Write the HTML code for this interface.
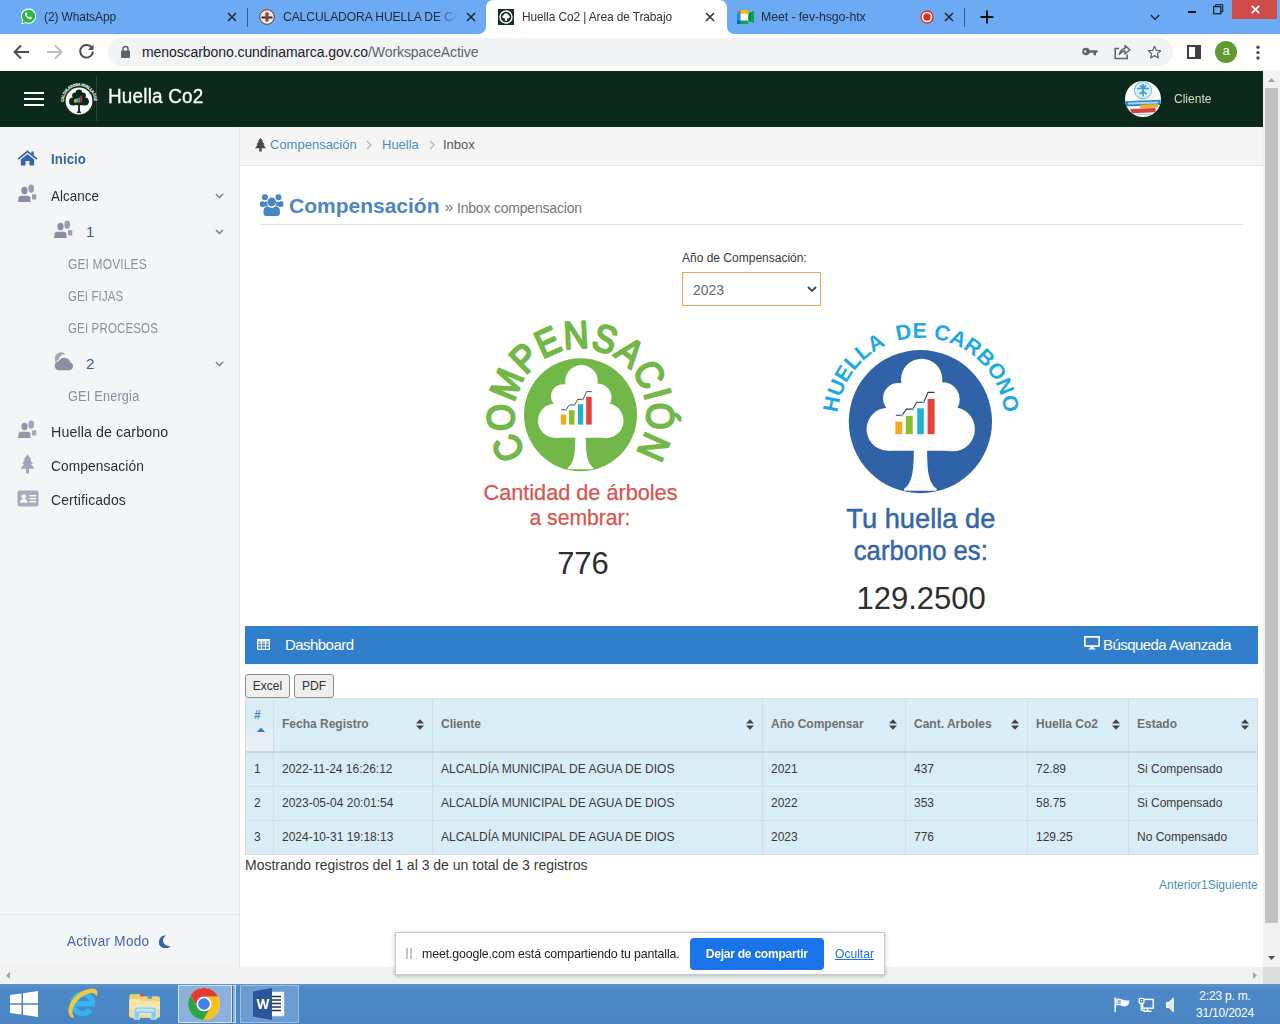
<!DOCTYPE html>
<html><head><meta charset="utf-8">
<style>
*{box-sizing:border-box;margin:0;padding:0}
html,body{width:1280px;height:1024px;overflow:hidden;background:#fff;font-family:"Liberation Sans",sans-serif;}
.abs{position:absolute}
#root{position:relative;width:1280px;height:1024px;overflow:hidden}
/* chrome tabs */
#tabbar{left:0;top:0;width:1280px;height:34px;background:#6cabf4}
.tabtxt{position:absolute;transform-origin:0 50%;top:9px;font-size:13px;color:#1f2937;white-space:nowrap;letter-spacing:-0.1px}
#acttab{left:486px;top:0;width:241px;height:34px;background:#fff;border-radius:8px 8px 0 0}
#addr{left:0;top:34px;width:1280px;height:37px;background:#fff}
#omni{left:108px;top:38px;width:1065px;height:28px;border-radius:14px;background:#f1f3f4}
#url{left:142px;top:44px;font-size:14px;color:#202124;white-space:nowrap;letter-spacing:-0.08px}
#url span{color:#5f6368}
/* app header */
#hdr{left:0;top:71px;width:1263px;height:56px;background:#0c2a1b}
#brand{left:108px;top:85px;font-size:20px;color:#fff;white-space:nowrap;letter-spacing:0.2px;transform:scaleX(.945);transform-origin:0 50%;-webkit-text-stroke:.3px #fff}
#cliente{left:1174px;top:91px;font-size:13px;color:#d8dcc8;white-space:nowrap;transform:scaleX(.925);transform-origin:0 50%}
/* sidebar */
#side{left:0;top:127px;width:240px;height:840px;background:#f4f5f7;border-right:1px solid #e6e7ea}
.sitem{position:absolute;transform-origin:0 50%;font-size:15px;color:#2b2f36;white-space:nowrap;letter-spacing:0.1px}
.ssub{position:absolute;transform-origin:0 50%;font-size:14px;color:#8c8fa0;white-space:nowrap;left:68px;letter-spacing:0.2px}
/* main */
#crumb{left:240px;top:127px;width:1023px;height:39px;background:#f5f5f5;border-bottom:1px solid #e5e5e5}
.ctx{position:absolute;top:137px;font-size:13px;white-space:nowrap}
#ptitle{left:289px;top:194px;font-size:21px;font-weight:bold;color:#4a86c5;white-space:nowrap}
#psub{left:445px;top:200px;font-size:14px;color:#777;white-space:nowrap;letter-spacing:-0.2px}
#pline{left:260px;top:224px;width:983px;height:1px;background:#dbe3ec}
#lbl{left:682px;top:251px;font-size:12px;color:#393939;white-space:nowrap}
#sel{left:682px;top:272px;width:139px;height:34px;border:1px solid #eba562;background:#fff}
#sel span{position:absolute;left:10px;top:8.500px;font-size:14px;color:#696969}
.big{position:absolute;font-size:32px;color:#2d2d2d;white-space:nowrap}
/* dashboard */
#dash{left:245px;top:626px;width:1013px;height:38px;background:#307ecc}
#dash .t{position:absolute;left:40px;top:10px;font-size:15px;color:#fff;letter-spacing:-0.55px}
#dash .r{position:absolute;left:858px;top:9.500px;font-size:15px;color:#fff;letter-spacing:-0.55px;white-space:nowrap}
.btn{position:absolute;top:674px;height:24px;border:1px solid #8e8e8e;border-radius:3px;background:#efefef;font-size:12px;color:#333;text-align:center;line-height:22px}
#tbl{left:245px;top:699px;width:1013px;height:156px;background:#d9edf7}
.hl{position:absolute;background:#d5dde2}
.th{position:absolute;top:717px;font-size:12px;font-weight:bold;color:#707070;white-space:nowrap}
.td{position:absolute;font-size:12px;color:#393939;white-space:nowrap}
#info{left:245px;top:857px;font-size:14px;color:#393939;white-space:nowrap}
#pag{left:1159px;top:878px;font-size:12px;color:#4c8fbd;white-space:nowrap}
/* scrollbars */
#vsb{left:1263px;top:71px;width:17px;height:896px;background:#f1f1f1}
#vth{left:1265px;top:88px;width:13px;height:835px;background:#c1c1c1}
#hsb{left:0;top:967px;width:1263px;height:17px;background:#f1f1f1}
/* share bar */
#share{left:395px;top:932px;width:490px;height:43px;background:#fff;border:1px solid #c9c9c9;box-shadow:0 1px 4px rgba(0,0,0,.25)}
#share .m{position:absolute;left:26px;top:13px;font-size:13px;color:#202124;white-space:nowrap;letter-spacing:-0.15px;transform:scaleX(.952);transform-origin:0 50%}
#share .b{position:absolute;left:294px;top:5px;width:134px;height:32px;border-radius:4px;background:#1a73e8;color:#fff;font-size:13px;font-weight:bold;text-align:center;line-height:31px;letter-spacing:-0.3px}
#share .o{position:absolute;left:439px;top:13px;font-size:13px;color:#1a73e8;text-decoration:underline;transform:scaleX(.93);transform-origin:0 50%}
/* taskbar */
#task{left:0;top:984px;width:1280px;height:40px;background:linear-gradient(#5b95d2 0,#4c88c7 12%,#4a84c3 100%)}
#clock{left:1180px;top:988px;width:90px;text-align:center;font-size:12px;color:#fff;line-height:17px;letter-spacing:-0.2px}
</style></head><body>
<div id="root">
<div class="abs" id="tabbar"></div>
<svg class="abs" style="left:476px;top:0" width="262" height="34" viewBox="476 0 262 34"><path d="M478 34C483 34 486 31 486 26V8C486 3 489 0 494 0H719C724 0 727 3 727 8V26C727 31 730 34 735 34z" fill="#fff"/></svg>
<!-- whatsapp icon -->
<svg class="abs" style="left:20px;top:8px" width="17" height="17" viewBox="0 0 17 17"><circle cx="8.5" cy="8.2" r="7.6" fill="#fff"/><circle cx="8.5" cy="8.2" r="6.5" fill="#2cb742"/><path d="M1 16.5 L2.6 11.5 L6 14.8Z" fill="#fff"/><path d="M2.4 15.2 L3.4 12 L5.6 14.2Z" fill="#2cb742"/><path d="M5.6 4.6c.4-.5 1-.4 1.200 0l.6 1.400c.1.300 0 .5-.2.700l-.4.500c.5 1 1.300 1.800 2.400 2.300l.6-.6c.2-.2.500-.3.700-.1l1.300.7c.4.200.4.700.1 1.100-.6.800-1.600 1-2.600.6-2-.7-3.500-2.200-4.200-4.100-.3-.9-.1-1.800.5-2.500z" fill="#fff"/></svg>
<div class="tabtxt" style="left:44px;transform:scaleX(.92)">(2) WhatsApp</div>
<svg class="abs" style="left:227px;top:12px" width="10" height="10" viewBox="0 0 10 10"><path d="M1 1L9 9M9 1L1 9" stroke="#1f2937" stroke-width="1.6"/></svg>
<div class="abs" style="left:247px;top:8px;width:1px;height:19px;background:#3c5a80"></div>
<!-- tab2 favicon -->
<svg class="abs" style="left:259px;top:9px" width="16" height="16" viewBox="0 0 16 16"><circle cx="8" cy="8" r="7.3" fill="#efe6e0" stroke="#5a3a30" stroke-width="1"/><path d="M2.500 7.500h11v2h-11z" fill="#3a2a28"/><path d="M6.500 3.500h3v9h-3z" fill="#7a4a40"/><circle cx="8" cy="5" r="1.600" fill="#c0392b"/></svg>
<div class="tabtxt" style="left:283px;width:176px;overflow:hidden;-webkit-mask-image:linear-gradient(90deg,#000 86%,transparent)"><span style="display:inline-block;transform:scaleX(.93);transform-origin:0 50%">CALCULADORA HUELLA DE CARBONO</span></div>
<svg class="abs" style="left:466px;top:12px" width="10" height="10" viewBox="0 0 10 10"><path d="M1 1L9 9M9 1L1 9" stroke="#1f2937" stroke-width="1.6"/></svg>
<!-- active tab favicon -->
<svg class="abs" style="left:498px;top:9px" width="16" height="16" viewBox="0 0 16 16"><rect width="16" height="16" fill="#14301f"/><circle cx="8" cy="8" r="6" fill="none" stroke="#fff" stroke-width="1.400"/><path d="M8 4.200c1.300 0 2.200.9 2.200 1.900 1 .2 1.500.9 1.500 1.700 0 1-.9 1.700-2 1.700h-.9l.5 2.300h-2.600l.5-2.300h-.9c-1.100 0-2-.7-2-1.700 0-.8.500-1.500 1.500-1.700 0-1 .9-1.900 2.200-1.900z" fill="#fff"/></svg>
<div class="tabtxt" style="left:522px;color:#30343a;transform:scaleX(.915)">Huella Co2 | Area de Trabajo</div>
<svg class="abs" style="left:705px;top:12px" width="10" height="10" viewBox="0 0 10 10"><path d="M1 1L9 9M9 1L1 9" stroke="#30343a" stroke-width="1.600"/></svg>
<!-- meet icon -->
<svg class="abs" style="left:737px;top:10px" width="17" height="14" viewBox="0 0 17 14"><path d="M0 3.500L3.500 0H11.500v4L15.500 1.200c.5-.4 1.500-.2 1.500.6v10.400c0 .8-1 1-1.500.6L11.500 10v4H1.200C.5 14 0 13.500 0 12.800z" fill="#00ac47"/><path d="M0 3.500L3.500 0v3.500z" fill="#ea4335"/><path d="M3.500 0h8v3.500h-8z" fill="#ffba00"/><path d="M0 3.500h3.500v7H0z" fill="#2684fc"/><path d="M0 10.500h3.500V14H1.200C.5 14 0 13.500 0 12.800z" fill="#0066da"/><path d="M3.500 3.500h8v7h-8z" fill="#fff"/><path d="M11.500 4v6l2.500 2V2z" fill="#00832d"/></svg>
<div class="tabtxt" style="left:761px;transform:scaleX(.95)">Meet - fev-hsgo-htx</div>
<svg class="abs" style="left:920px;top:10px" width="14" height="14" viewBox="0 0 14 14"><circle cx="7" cy="7" r="6" fill="#fff" stroke="#d93025" stroke-width="1.300"/><circle cx="7" cy="7" r="3.700" fill="#d93025"/></svg>
<svg class="abs" style="left:944px;top:12px" width="10" height="10" viewBox="0 0 10 10"><path d="M1 1L9 9M9 1L1 9" stroke="#1f2937" stroke-width="1.600"/></svg>
<div class="abs" style="left:964px;top:8px;width:1px;height:19px;background:#3c5a80"></div>
<svg class="abs" style="left:980px;top:10px" width="14" height="14" viewBox="0 0 14 14"><path d="M7 .5V13.500M.5 7H13.500" stroke="#111" stroke-width="2"/></svg>
<svg class="abs" style="left:1150px;top:14px" width="10" height="6.700" viewBox="0 0 12 8"><path d="M1 1.200L6 6.200L11 1.200" stroke="#1f2937" stroke-width="1.700" fill="none"/></svg>
<div class="abs" style="left:1188px;top:10.500px;width:8px;height:2px;background:#111"></div>
<svg class="abs" style="left:1213px;top:4px" width="10.500" height="10.500" viewBox="0 0 12 12"><path d="M3 3V.8h8.200V9H9" stroke="#111" stroke-width="1.100" fill="none"/><rect x=".8" y="3" width="8.200" height="8.200" stroke="#111" stroke-width="1.300" fill="none"/></svg>
<div class="abs" style="left:1232px;top:0;width:45px;height:19px;background:#cf4c4c"></div>
<svg class="abs" style="left:1250.500px;top:5px" width="9" height="9" viewBox="0 0 11 11"><path d="M1 1L10 10M10 1L1 10" stroke="#fff" stroke-width="2.100"/></svg>

<div class="abs" id="addr"></div>
<div class="abs" id="omni"></div>
<svg class="abs" style="left:13px;top:44px" width="17" height="16" viewBox="0 0 17 16"><path d="M16 8H2M8 1.500L1.500 8L8 14.500" stroke="#4a4d51" stroke-width="1.900" fill="none"/></svg>
<svg class="abs" style="left:46px;top:44px" width="17" height="16" viewBox="0 0 17 16"><path d="M1 8H15M9 1.500L15.500 8L9 14.500" stroke="#bbbdc0" stroke-width="1.900" fill="none"/></svg>
<svg class="abs" style="left:78px;top:43px" width="17" height="17" viewBox="0 0 17 17"><path d="M14 5.200A6.300 6.300 0 1 0 14.800 8.500" stroke="#4a4d51" stroke-width="1.900" fill="none"/><path d="M15.500 1.500V7H10z" fill="#4a4d51"/></svg>
<svg class="abs" style="left:120px;top:45px" width="11" height="14" viewBox="0 0 11 14"><rect x="1" y="5.500" width="9" height="7.500" rx="1" fill="#5f6368"/><path d="M3 6V4a2.500 2.500 0 0 1 5 0V6" stroke="#5f6368" stroke-width="1.500" fill="none"/></svg>
<div class="abs" id="url">menoscarbono.cundinamarca.gov.co<span>/WorkspaceActive</span></div>
<!-- key -->
<svg class="abs" style="left:1082px;top:46px" width="16" height="11" viewBox="0 0 16 11"><circle cx="4" cy="5.500" r="3.800" fill="#5f6368"/><circle cx="3.200" cy="5.500" r="1.200" fill="#f1f3f4"/><path d="M7 4.200h8.500v2.600H14v2.400h-2.600V6.800H7z" fill="#5f6368"/></svg>
<!-- share -->
<svg class="abs" style="left:1113px;top:43px" width="18" height="17" viewBox="0 0 18 17"><path d="M6 5.500H2.200V15.500H14.200V11.500" stroke="#5f6368" stroke-width="1.500" fill="none"/><path d="M6.500 11.500C7 7.500 9.500 5.800 12 5.600V2.500L16.800 6.800L12 11V8C10 8 8 9 6.500 11.500z" stroke="#5f6368" stroke-width="1.400" fill="none" stroke-linejoin="round"/></svg>
<!-- star -->
<svg class="abs" style="left:1147px;top:44.500px" width="15" height="14" viewBox="0 0 18 17"><path d="M9 1.500L11.200 6.400L16.500 6.900L12.500 10.500L13.700 15.700L9 12.900L4.300 15.700L5.500 10.500L1.500 6.900L6.800 6.400z" stroke="#5f6368" stroke-width="1.500" fill="none" stroke-linejoin="round"/></svg>
<svg class="abs" style="left:1187px;top:45px" width="14" height="14" viewBox="0 0 14 14"><rect x="1" y="1" width="12" height="12" stroke="#3c4043" stroke-width="2" fill="none"/><rect x="8" y="1" width="5" height="12" fill="#3c4043"/></svg>
<div class="abs" style="left:1215px;top:41px;width:22px;height:22px;border-radius:11px;background:#5e9c2f;color:#fff;font-size:13px;text-align:center;line-height:20px">a</div>
<svg class="abs" style="left:1254px;top:44px" width="8" height="18" viewBox="0 0 8 18"><circle cx="4" cy="3.200" r="1.700" fill="#4a4d51"/><circle cx="4" cy="8.600" r="1.700" fill="#4a4d51"/><circle cx="4" cy="14" r="1.700" fill="#4a4d51"/></svg>

<div class="abs" id="hdr"></div>
<div class="abs" style="left:24px;top:92px;width:20px;height:2px;background:#fff;box-shadow:0 6px 0 #fff,0 12px 0 #fff"></div>
<div class="abs" style="left:96px;top:76px;width:1px;height:45px;background:#2c4536"></div>
<!-- brand logo -->
<svg class="abs" style="left:56px;top:78.300px" width="46" height="46" viewBox="-23 -23 46 46">
<defs><path id="arcb" d="M-15.300 0.800 A15.300 15.300 0 0 1 15.300 -0.500"/></defs>
<text font-family="Liberation Sans, sans-serif" font-weight="bold" font-size="3.900" fill="#e8ece9" stroke="#e8ece9" stroke-width=".25"><textPath href="#arcb" textLength="48" lengthAdjust="spacingAndGlyphs">CALCULADORA HUELLA CO2</textPath></text>
<circle cx="0" cy="0" r="13.400" fill="#fff"/>
<g fill="#0c2818"><circle cx="0" cy="-8.300" r="3.300"/><circle cx="-3.900" cy="-5.400" r="3"/><circle cx="3.900" cy="-5.400" r="3"/><circle cx="-6" cy=".5" r="3.900"/><circle cx="6" cy=".5" r="3.900"/><rect x="-6" y="-6" width="12" height="10.200"/><path d="M-.9 3V9.500L-2.300 11.900H2.300L.9 9.500V3z"/></g>
<rect x="-4.800" y="-1.800" width="2" height="3.400" fill="#e6c52f"/><rect x="-2.800" y="-2.600" width="2" height="4.200" fill="#7db63b"/><rect x="-.7" y="-3.400" width="2" height="5" fill="#2f9ad0"/><rect x="1.400" y="-5.300" width="1.800" height="6.900" fill="#b63a3a"/>
</svg>
<div class="abs" id="brand">Huella Co2</div>
<!-- client avatar -->
<svg class="abs" style="left:1124px;top:80px" width="38" height="38" viewBox="-19 -19 38 38">
<defs><clipPath id="avc"><circle cx="0" cy="0" r="18"/></clipPath></defs>
<circle cx="0" cy="0" r="18" fill="#fdfdfd"/>
<g clip-path="url(#avc)">
<circle cx="0" cy="-8.700" r="8.600" fill="#d9edf8" stroke="#5fb0dc" stroke-width=".9"/>
<path d="M0 -15V-2.500M-6 -10.500H6M-3.500 -5L0 -7.500L3.500 -5M-3 -13.500L0 -11L3 -13.500" stroke="#3f9fd3" stroke-width="1.700" fill="none"/>
<path d="M-18 2.200L17.500 .8V6L-18 7.400z" fill="#2b86c5"/>
<path d="M-2.800 5.800L15 5V8.600L-2.800 9.400z" fill="#efb02b"/>
<path d="M-13 9.900L12.500 9.100V13.300L-11 14.200z" fill="#d8403a"/>
<path d="M-6.500 14.800H8.500V16H-6.500z" fill="#c9c9c9"/>
<path d="M-15 3.600L15 2.400V4.400L-15 5.600z" fill="#dcecf6" opacity=".75"/>
</g>
</svg>
<div class="abs" id="cliente">Cliente</div>

<div class="abs" id="side"></div>
<!-- home icon -->
<svg class="abs" style="left:17px;top:150px" width="21" height="16" viewBox="0 0 23 18"><path d="M11.500 0.300L0.300 9.500L1.600 11L11.500 2.900L21.400 11L22.700 9.500L18.500 6V1.800H15.800V3.800z" fill="#3a62a8"/><path d="M11.500 4.600L4 10.800V17.500H9.300V12.500H13.700V17.500H19V10.800z" fill="#3a62a8"/></svg>
<div class="sitem" style="transform:scaleX(0.91);left:51px;top:151px;color:#3b63a8;font-weight:bold;font-size:14.500px">Inicio</div>
<!-- users icons -->
<svg class="abs uic" style="left:18px;top:184px" width="19" height="19" viewBox="0 0 19 19"><use href="#ufr"/></svg>
<div class="sitem" style="transform:scaleX(0.89);left:51px;top:187px">Alcance</div>
<svg class="abs" style="left:215px;top:193px" width="9" height="6" viewBox="0 0 9 6"><path d="M1 1L4.500 4.500L8 1" stroke="#83879a" stroke-width="1.700" fill="none"/></svg>
<svg class="abs" style="left:54px;top:220px" width="19" height="19" viewBox="0 0 19 19"><use href="#ufr"/></svg>
<div class="sitem" style="left:86px;top:223px;color:#3d5a96">1</div>
<svg class="abs" style="left:215px;top:229px" width="9" height="6" viewBox="0 0 9 6"><path d="M1 1L4.500 4.500L8 1" stroke="#83879a" stroke-width="1.700" fill="none"/></svg>
<div class="ssub" style="transform:scaleX(0.853);top:256px">GEI MOVILES</div>
<div class="ssub" style="transform:scaleX(0.815);top:288px">GEI FIJAS</div>
<div class="ssub" style="transform:scaleX(0.82);top:320px">GEI PROCESOS</div>
<!-- cloud -->
<svg class="abs" style="left:53px;top:351px" width="21" height="20" viewBox="0 0 21 20"><path d="M2 8.500A6.200 6.200 0 0 1 12.500 3.200A7 7 0 0 0 5.500 8.800A6 6 0 0 0 2.300 11.800A6 6 0 0 1 2 8.500z" fill="#a4a6b6"/><path d="M5.200 19.200A4.600 4.600 0 0 1 5.600 10.200A6.300 6.300 0 0 1 17.300 11.300A4.100 4.100 0 0 1 16.500 19.200z" fill="#8d90a3"/></svg>
<div class="sitem" style="left:86px;top:355px;color:#3d5a96">2</div>
<svg class="abs" style="left:215px;top:361px" width="9" height="6" viewBox="0 0 9 6"><path d="M1 1L4.500 4.500L8 1" stroke="#83879a" stroke-width="1.700" fill="none"/></svg>
<div class="ssub" style="transform:scaleX(0.91);top:388px">GEI Energia</div>
<svg class="abs" style="left:18px;top:420px" width="19" height="19" viewBox="0 0 19 19"><use href="#ufr" opacity=".9"/></svg>
<div class="sitem" style="transform:scaleX(0.95);left:51px;top:423px">Huella de carbono</div>
<!-- tree -->
<svg class="abs" style="left:20px;top:454px" width="15" height="20" viewBox="0 0 15 20"><path d="M7.500 0.500L11.500 5.500H9.800L13 9.800H10.800L14.500 14.800H9V19.500H6V14.800H0.500L4.200 9.800H2L5.200 5.500H3.500z" fill="#a3a5b7"/></svg>
<div class="sitem" style="transform:scaleX(0.918);left:51px;top:457px">Compensación</div>
<!-- id card -->
<svg class="abs" style="left:17px;top:490px" width="22" height="17" viewBox="0 0 22 17"><rect x=".5" y=".5" width="21" height="16" rx="2" fill="#a9abbf"/><circle cx="6.800" cy="6.500" r="2.300" fill="#fff"/><path d="M3 12.800a3.800 3.800 0 0 1 7.600 0z" fill="#fff"/><rect x="12.500" y="5" width="6.500" height="1.400" fill="#fff"/><rect x="12.500" y="8" width="6.500" height="1.400" fill="#fff"/><rect x="12.500" y="11" width="6.500" height="1.400" fill="#fff"/></svg>
<div class="sitem" style="transform:scaleX(0.932);left:51px;top:491px">Certificados</div>
<div class="abs" style="left:0;top:914px;width:239px;height:1px;background:#e3e4e8"></div>
<div class="sitem" style="transform:scaleX(.965);left:67px;top:933px;color:#4565a6;font-size:14px;letter-spacing:0.3px">Activar Modo</div>
<svg class="abs" style="left:158px;top:934.500px" width="13.500" height="13.500" viewBox="0 0 14 14"><path d="M8.500 .5A6.700 6.700 0 1 0 13.300 10.800A5.600 5.600 0 0 1 8.500 .5z" fill="#3b63a8"/></svg>
<svg width="0" height="0" style="position:absolute"><defs><g id="ufr"><ellipse cx="13.2" cy="4.600" rx="2.900" ry="4.200" fill="#9b9db1"/><rect x="14" y="10.300" width="4.300" height="5.200" rx=".4" fill="#9b9db1"/><ellipse cx="6.500" cy="6.600" rx="3.700" ry="4.300" fill="#f4f5f7"/><ellipse cx="6.500" cy="6.600" rx="3.100" ry="3.800" fill="#8a8da3"/><path d="M-.5 18.500L.2 12.500Q.8 10.800 3.500 10.800H9.500Q12.400 10.800 12.900 12.500L13.200 18.500z" fill="#f4f5f7"/><path d="M0 18L.7 13.200Q1.100 11.700 3.500 11.700H9.500Q11.900 11.700 12.300 13.200L12.600 18z" fill="#8a8da3"/></g></defs></svg>

<div class="abs" id="crumb"></div>
<svg class="abs" style="left:255px;top:138px" width="11" height="13.500" viewBox="0 0 15 19" preserveAspectRatio="none"><path d="M7.500 0L11.200 4.500H9.700L13.200 9H11.200L15 14.500H9.200V19H5.800V14.500H0L3.800 9H1.800L5.300 4.500H3.800z" fill="#4a4a4a"/></svg>
<div class="ctx" style="left:270px;color:#4c8fbd">Compensación</div>
<svg class="abs" style="left:366px;top:140px" width="6" height="10" viewBox="0 0 6 10"><path d="M1 1L5 5L1 9" stroke="#b2b6bf" stroke-width="1.300" fill="none"/></svg>
<div class="ctx" style="left:382px;color:#4c8fbd">Huella</div>
<svg class="abs" style="left:429px;top:140px" width="6" height="10" viewBox="0 0 6 10"><path d="M1 1L5 5L1 9" stroke="#b2b6bf" stroke-width="1.300" fill="none"/></svg>
<div class="ctx" style="left:443px;color:#555">Inbox</div>
<!-- users group icon -->
<svg class="abs" style="left:260px;top:194px" width="24" height="23" viewBox="0 0 24 23"><g fill="#4a86c5"><circle cx="4.900" cy="3.300" r="3"/><circle cx="18.500" cy="3.300" r="3"/><circle cx="11.700" cy="8" r="4.400"/>
<path d="M0 11V9.300C0 7.800 1.200 7 2.500 7C3.200 7.600 4 7.900 4.900 7.900C5.600 7.900 6.300 7.700 6.900 7.300C6.800 9 7.300 10.500 8.300 11.600C6.500 11.700 5.200 12.200 4.300 13H2C.8 13 0 12.200 0 11z"/>
<path d="M23.400 11V9.300C23.400 7.800 22.200 7 20.900 7C20.200 7.600 19.400 7.900 18.500 7.900C17.800 7.900 17.100 7.700 16.500 7.300C16.600 9 16.100 10.500 15.100 11.600C16.900 11.700 18.200 12.200 19.100 13H21.400C22.600 13 23.400 12.200 23.400 11z"/>
<path d="M3.500 19.500V16.500C3.500 14 5.500 12.300 8 12.200C9 13.200 10.300 13.700 11.700 13.700S14.400 13.200 15.400 12.200C17.900 12.300 19.900 14 19.900 16.500V19.500C19.900 21 18.800 22 17.300 22H6.100C4.600 22 3.500 21 3.500 19.500z"/></g></svg>
<div class="abs" id="ptitle">Compensación</div>
<svg class="abs" style="left:445px;top:204px" width="8" height="8" viewBox="0 0 8 8"><path d="M.8 .8L3.800 4L.8 7.200M4.200 .8L7.200 4L4.200 7.200" stroke="#777" stroke-width="1.100" fill="none"/></svg>
<div class="abs" id="psub" style="left:457px">Inbox compensacion</div>
<div class="abs" id="pline"></div>
<div class="abs" id="lbl">Año de Compensación:</div>
<div class="abs" id="sel"><span>2023</span><svg style="position:absolute;left:123.500px;top:13px" width="10" height="7" viewBox="0 0 10 7"><path d="M1 1L5 5L9 1" stroke="#444" stroke-width="1.800" fill="none"/></svg></div>

<svg class="abs" style="left:440px;top:300px" width="660" height="320" viewBox="440 300 660 320" font-family="Liberation Sans, sans-serif">
<defs>
<g id="tree">
<g fill="#fff">
<circle cx="1" cy="-33.300" r="16.300"/>
<circle cx="-17.500" cy="-18.500" r="12"/><circle cx="17.500" cy="-17.500" r="13.500"/>
<circle cx="-25.500" cy="6" r="17"/><circle cx="25.500" cy="6" r="17.500"/>
<rect x="-25.500" y="-22" width="51" height="45"/>
<path d="M-5.200 20 C-5.200 38 -6 48 -12.800 53 Q-13.500 54.600 -11.500 54.600 H11.500 Q13.500 54.600 12.900 53 C6 48 5.300 38 5.300 20z"/>
</g>
<rect x="-19.700" y="0" width="5.400" height="9.900" fill="#f6a81c"/>
<rect x="-11.500" y="-4.500" width="5.500" height="14.400" fill="#8cbd2a"/>
<rect x="-2.500" y="-10.500" width="5.200" height="20.400" fill="#1fb0d8"/>
<rect x="5.700" y="-17.900" width="5.500" height="27.800" fill="#e8413c"/>
<path d="M-19.400 -5H-14.500L-11.100 -9.800H-6L-2.900 -15.300H2.600L6.100 -23.100H11.200" fill="none" stroke="#353a45" stroke-width=".9"/>
<circle cx="-14.500" cy="-5" r="1" fill="#58c4e8"/><circle cx="-6" cy="-9.800" r="1" fill="#58c4e8"/><circle cx="2.600" cy="-15.300" r="1" fill="#58c4e8"/>
</g>
<path id="arc1" d="M580.500 485 A66 66 0 1 1 580.600 485"/>
<path id="arc2" d="M921 505.400 A83.800 83.800 0 1 1 921.100 505.400"/>
</defs>
<circle cx="580.500" cy="414.700" r="56.500" fill="#72b848"/>
<use href="#tree" transform="translate(580.500 414.700)"/>
<g font-size="38.500" fill="#72b848" stroke="#72b848" stroke-width="2.100" stroke-linejoin="round" text-anchor="middle"><text transform="translate(580.5 414.7) rotate(-114.84) translate(0 -66.5) scale(0.900 1)">C</text><text transform="translate(580.5 414.7) rotate(-92.02) translate(0 -66.5) scale(0.900 1)">O</text><text transform="translate(580.5 414.7) rotate(-67.54) translate(0 -66.5) scale(0.900 1)">M</text><text transform="translate(580.5 414.7) rotate(-44.72) translate(0 -66.5) scale(0.900 1)">P</text><text transform="translate(580.5 414.7) rotate(-24.37) translate(0 -66.5) scale(0.900 1)">E</text><text transform="translate(580.5 414.7) rotate(-3.21) translate(0 -66.5) scale(0.900 1)">N</text><text transform="translate(580.5 414.7) rotate(17.96) translate(0 -66.5) scale(0.900 1)">S</text><text transform="translate(580.5 414.7) rotate(38.30) translate(0 -66.5) scale(0.900 1)">A</text><text transform="translate(580.5 414.7) rotate(59.46) translate(0 -66.5) scale(0.900 1)">C</text><text transform="translate(580.5 414.7) rotate(74.82) translate(0 -66.5) scale(0.900 1)">I</text><text transform="translate(580.5 414.7) rotate(91.02) translate(0 -66.5) scale(0.900 1)">Ó</text><text transform="translate(580.5 414.7) rotate(113.84) translate(0 -66.5) scale(0.900 1)">N</text></g>
<circle cx="920.400" cy="421.600" r="71.600" fill="#2f62a6"/>
<use href="#tree" transform="translate(920.400 421.600) scale(1.267)"/>
<text font-size="21.500" font-weight="bold" fill="#1fa9e3" letter-spacing="0" text-anchor="middle" xml:space="preserve"><textPath href="#arc2" startOffset="50%">HUELLA&#160;&#160;DE CARBONO</textPath></text>
<g fill="#d9534f" font-size="21.200" text-anchor="middle" stroke="#d9534f" stroke-width=".25"><text x="580.500" y="499.500" textLength="194" lengthAdjust="spacingAndGlyphs">Cantidad de árboles</text><text x="580" y="524.800" textLength="101" lengthAdjust="spacingAndGlyphs">a sembrar:</text></g>
<g fill="#3465a4" font-size="28.500" text-anchor="middle" stroke="#3465a4" stroke-width=".5"><text x="920.800" y="528.200" textLength="149" lengthAdjust="spacingAndGlyphs">Tu huella de</text><text x="920.800" y="559.800" textLength="134" lengthAdjust="spacingAndGlyphs">carbono es:</text></g>
<g fill="#2d2d2d" font-size="31" text-anchor="middle"><text x="583" y="573.900">776</text><text x="921.200" y="608.500">129.2500</text></g>
</svg>

<div class="abs" id="dash"><svg style="position:absolute;left:12px;top:13px" width="13" height="11" viewBox="0 0 13 11"><rect x=".5" y=".5" width="12" height="10" rx="1" fill="none" stroke="#fff" stroke-width="1.400"/><path d="M0 4H13M0 7H13M4.500 1V10M8.500 1V10" stroke="#fff" stroke-width="1"/><rect x="0" y="0" width="13" height="2.500" fill="#fff"/></svg><div class="t">Dashboard</div>
<svg style="position:absolute;left:839px;top:10px" width="16" height="14" viewBox="0 0 16 14"><rect x=".8" y=".8" width="14.400" height="9.400" rx="1" fill="none" stroke="#fff" stroke-width="1.800"/><path d="M6.500 10.500L6 12.500H4.500V13.600H11.500V12.500H10L9.500 10.500z" fill="#fff"/></svg><div class="r">Búsqueda Avanzada</div></div>
<div class="btn" style="left:245px;width:45px">Excel</div><div class="btn" style="left:294px;width:40px">PDF</div>
<div class="abs" style="left:245px;top:664px;width:1013px;height:1px;background:#e6f5fb"></div><div class="abs" id="tbl"></div>
<div class="hl" style="left:273px;top:699px;width:1px;height:156px"></div><div class="hl" style="left:432px;top:699px;width:1px;height:156px"></div><div class="hl" style="left:762px;top:699px;width:1px;height:156px"></div><div class="hl" style="left:905px;top:699px;width:1px;height:156px"></div><div class="hl" style="left:1027px;top:699px;width:1px;height:156px"></div><div class="hl" style="left:1128px;top:699px;width:1px;height:156px"></div><div class="hl" style="left:245px;top:698px;width:1013px;height:1px;background:#dde3e6"></div><div class="hl" style="left:245px;top:751px;width:1013px;height:2px;background:#d0d6da"></div><div class="hl" style="left:245px;top:786px;width:1013px;height:1px"></div><div class="hl" style="left:245px;top:820px;width:1013px;height:1px"></div><div class="hl" style="left:245px;top:854px;width:1013px;height:1px"></div><div class="hl" style="left:245px;top:699px;width:1px;height:156px"></div><div class="hl" style="left:1257px;top:699px;width:1px;height:156px"></div><div class="abs" style="left:246px;top:699px;width:27px;height:52px;background:linear-gradient(#d9edf7 35%,#ecf0f3)"></div><div class="th" style="left:254px;top:708px;color:#4c8fbd">#</div><svg class="abs" style="left:257px;top:727px" width="8" height="5" viewBox="0 0 8 5"><path d="M0 5L4 .5L8 5z" fill="#307ecc"/></svg><div class="th" style="left:282px">Fecha Registro</div><svg class="abs" style="left:416px;top:719px" width="8" height="11" viewBox="0 0 8 11"><path d="M0 4.500L4 .3L8 4.500zM0 6.500L4 10.700L8 6.500z" fill="#444"/></svg><div class="th" style="left:441px">Cliente</div><svg class="abs" style="left:746px;top:719px" width="8" height="11" viewBox="0 0 8 11"><path d="M0 4.500L4 .3L8 4.500zM0 6.500L4 10.700L8 6.500z" fill="#444"/></svg><div class="th" style="left:771px">Año Compensar</div><svg class="abs" style="left:889px;top:719px" width="8" height="11" viewBox="0 0 8 11"><path d="M0 4.500L4 .3L8 4.500zM0 6.500L4 10.700L8 6.500z" fill="#444"/></svg><div class="th" style="left:914px">Cant. Arboles</div><svg class="abs" style="left:1011px;top:719px" width="8" height="11" viewBox="0 0 8 11"><path d="M0 4.500L4 .3L8 4.500zM0 6.500L4 10.700L8 6.500z" fill="#444"/></svg><div class="th" style="left:1036px">Huella Co2</div><svg class="abs" style="left:1112px;top:719px" width="8" height="11" viewBox="0 0 8 11"><path d="M0 4.500L4 .3L8 4.500zM0 6.500L4 10.700L8 6.500z" fill="#444"/></svg><div class="th" style="left:1137px">Estado</div><svg class="abs" style="left:1241px;top:719px" width="8" height="11" viewBox="0 0 8 11"><path d="M0 4.500L4 .3L8 4.500zM0 6.500L4 10.700L8 6.500z" fill="#444"/></svg><div class="td" style="left:254px;top:762px">1</div><div class="td" style="left:282px;top:762px">2022-11-24 16:26:12</div><div class="td" style="left:441px;top:762px">ALCALDÍA MUNICIPAL DE AGUA DE DIOS</div><div class="td" style="left:771px;top:762px">2021</div><div class="td" style="left:914px;top:762px">437</div><div class="td" style="left:1036px;top:762px">72.89</div><div class="td" style="left:1137px;top:762px">Si Compensado</div><div class="td" style="left:254px;top:796px">2</div><div class="td" style="left:282px;top:796px">2023-05-04 20:01:54</div><div class="td" style="left:441px;top:796px">ALCALDÍA MUNICIPAL DE AGUA DE DIOS</div><div class="td" style="left:771px;top:796px">2022</div><div class="td" style="left:914px;top:796px">353</div><div class="td" style="left:1036px;top:796px">58.75</div><div class="td" style="left:1137px;top:796px">Si Compensado</div><div class="td" style="left:254px;top:830px">3</div><div class="td" style="left:282px;top:830px">2024-10-31 19:18:13</div><div class="td" style="left:441px;top:830px">ALCALDÍA MUNICIPAL DE AGUA DE DIOS</div><div class="td" style="left:771px;top:830px">2023</div><div class="td" style="left:914px;top:830px">776</div><div class="td" style="left:1036px;top:830px">129.25</div><div class="td" style="left:1137px;top:830px">No Compensado</div><div class="abs" id="info">Mostrando registros del 1 al 3 de un total de 3 registros</div>
<div class="abs" id="pag">Anterior1Siguiente</div>

<div class="abs" id="vsb"></div><div class="abs" id="vth"></div>
<svg class="abs" style="left:1268px;top:78px" width="7" height="4" viewBox="0 0 9 5"><path d="M0 5L4.500 0L9 5z" fill="#a3a3a3"/></svg>
<svg class="abs" style="left:1268px;top:956px" width="7" height="4" viewBox="0 0 9 5"><path d="M0 0L4.500 5L9 0z" fill="#505050"/></svg>
<div class="abs" id="hsb"></div>
<svg class="abs" style="left:6px;top:972px" width="4" height="7" viewBox="0 0 5 9"><path d="M5 0L0 4.500L5 9z" fill="#a3a3a3"/></svg>
<svg class="abs" style="left:1253px;top:972px" width="4" height="7" viewBox="0 0 5 9"><path d="M0 0L5 4.500L0 9z" fill="#a3a3a3"/></svg>
<div class="abs" style="left:1263px;top:967px;width:17px;height:17px;background:#dcdcdc"></div>

<div class="abs" id="share"><div style="position:absolute;left:10px;top:15px;width:2px;height:11px;background:#c4c4c4;box-shadow:4px 0 0 #c4c4c4"></div><div class="m">meet.google.com está compartiendo tu pantalla.</div><div class="b"><span style="display:inline-block;transform:scaleX(.93)">Dejar de compartir</span></div><div class="o">Ocultar</div></div>

<div class="abs" id="task"></div>
<!-- windows logo -->
<svg class="abs" style="left:10px;top:991px" width="28" height="26" viewBox="0 0 28 26"><path d="M0 4L11.500 2.400V12.300H0zM13 2.200L28 0V12.300H13zM0 13.700H11.500V23.600L0 22zM13 13.700H28V26L13 23.800z" fill="#fff"/></svg>
<!-- IE -->
<svg class="abs" style="left:66px;top:986px" width="34" height="34" viewBox="0 0 34 34">
<path d="M24.500 23.800 A9.800 9.800 0 1 1 26.600 17.800 H8" fill="none" stroke="#35b4ef" stroke-width="5.600"/>
<path d="M5.500 31.500C-1 27 3 13 15 6C23 1.500 31.500 1 31.500 6.500C31.500 8 31 9.500 30 11C30.500 7 26 5.500 19 9C9 14 3.500 25 8 30.500C7.500 31.800 6.500 32 5.500 31.500z" fill="#f3c73a"/>
</svg>
<!-- explorer -->
<svg class="abs" style="left:128px;top:989px" width="34" height="32" viewBox="128 989 34 32">
<path d="M129.300 996.500q0-2.500 2.500-2.500h7.500l2 2.200h16.200q2.500 0 2.500 2.500v16.800q0 2-2 2h-26.700q-2 0-2-2z" fill="#eccf79"/>
<rect x="131.500" y="992.300" width="4.500" height="2" fill="#3fae49"/><rect x="140" y="994.300" width="4" height="2" fill="#d9503f"/><rect x="147.500" y="996.300" width="4.500" height="2.300" fill="#3f9ad9"/>
<path d="M129.300 1000.500q0-1.500 1.500-1.500h8l2 1.800h17.700q1.500 0 1.500 1.500v13.200q0 2-2 2h-26.700q-2 0-2-2z" fill="#f7e6a6"/>
<path d="M129.300 1009h30.700v6.500q0 2-2 2h-26.700q-2 0-2-2z" fill="#f2dc92"/>
<path d="M134 1019.200v-9q0-3.200 3.200-3.200h16q3.200 0 3.200 3.200v9h-5.600v-5.700h-11.200v5.700z" fill="#8ccaf0" stroke="#d6eefb" stroke-width=".9"/>
<path d="M136 1010.200q0-1.500 1.500-1.500h15.400q1.500 0 1.500 1.500v1.300h-18.400z" fill="#c6e6f8"/>
</svg>
<!-- chrome button -->
<div class="abs" style="left:177.500px;top:984.500px;width:54px;height:38.500px;background:#8bb0da;border:1px solid #d3e2f2"></div>
<div class="abs" style="left:232px;top:984.500px;width:4px;height:38.500px;background:#8bb0da;border:1px solid #d3e2f2;border-left:1px solid #3f6fa8"></div>
<svg class="abs" style="left:187px;top:987px" width="34" height="34" viewBox="0 0 34 34"><circle cx="17" cy="17" r="16" fill="#fff"/>
<path d="M3.560 8.320A16 16 0 0 1 31.240 9.700L17 9.700A7.300 7.300 0 0 0 10.680 20.650z" fill="#e33b2e"/>
<path d="M31.240 9.700A16 16 0 0 1 16.200 32.980L23.320 20.650A7.300 7.300 0 0 0 17 9.700z" fill="#fbc116"/>
<path d="M16.200 32.980A16 16 0 0 1 3.560 8.320L10.680 20.650A7.300 7.300 0 0 0 23.320 20.650z" fill="#2fa24c"/>
<circle cx="17" cy="17" r="7.300" fill="#fff"/><circle cx="17" cy="17" r="5.800" fill="#3f7fe8"/></svg>
<!-- word button -->
<div class="abs" style="left:239.500px;top:984.500px;width:59px;height:38.500px;background:#6d9cd1;border:1px solid #9fbfe2"></div>
<svg class="abs" style="left:253px;top:988px" width="32" height="32" viewBox="0 0 32 32"><rect x="14" y="4" width="17" height="24" fill="#fff" stroke="#c9d6ea" stroke-width=".6"/><path d="M19 8.500h9M19 12h9M19 15.500h9M19 19h9M19 22.500h9" stroke="#22335c" stroke-width="1.500"/><path d="M0 3.500L19 0V32L0 28.500z" fill="#2b579a"/><path d="M3.500 11h2.300l1.500 7l1.700-7h2l1.700 7l1.500-7h2.300l-2.600 10h-2.300l-1.600-6.500l-1.600 6.500h-2.300z" fill="#fff"/></svg>
<!-- tray -->
<svg class="abs" style="left:1112px;top:994px" width="70" height="22" viewBox="1112 994 70 22">
<path d="M1115.200 997.400V1012.200" stroke="#fff" stroke-width="1.500"/>
<path d="M1116.300 998.800Q1119 997.800 1121.500 999.300T1129.600 1000.600L1128.300 1005Q1125 1007.300 1121.500 1005.800T1116.300 1006z" fill="#fff"/>
<path d="M1117.500 1000Q1119.200 999.400 1120.800 1000.300V1004.200Q1119.200 1003.600 1117.500 1004.300z" fill="#8fb4dd"/>
<rect x="1142.600" y="999.400" width="10.600" height="8.800" fill="none" stroke="#fff" stroke-width="1.400"/>
<path d="M1147.500 1008.500V1011M1143.500 1011.300H1151.500" stroke="#fff" stroke-width="1.500"/>
<rect x="1139.200" y="998.300" width="4.800" height="5" rx="1" fill="#4a84c3" stroke="#fff" stroke-width="1.300"/>
<circle cx="1141.600" cy="1000.500" r=".8" fill="#fff"/>
<path d="M1141.200 1003.500V1010.200H1144.500" stroke="#fff" stroke-width="1.300" fill="none"/>
<path d="M1166.600 1002.300H1169L1173.300 997.800V1011.800L1169 1007.600H1166.600z" fill="#dfe8f3" stroke="#fff" stroke-width="1" stroke-linejoin="round"/>
</svg>
<div class="abs" id="clock">2:23 p. m.<br>31/10/2024</div>

</div>
</body></html>
